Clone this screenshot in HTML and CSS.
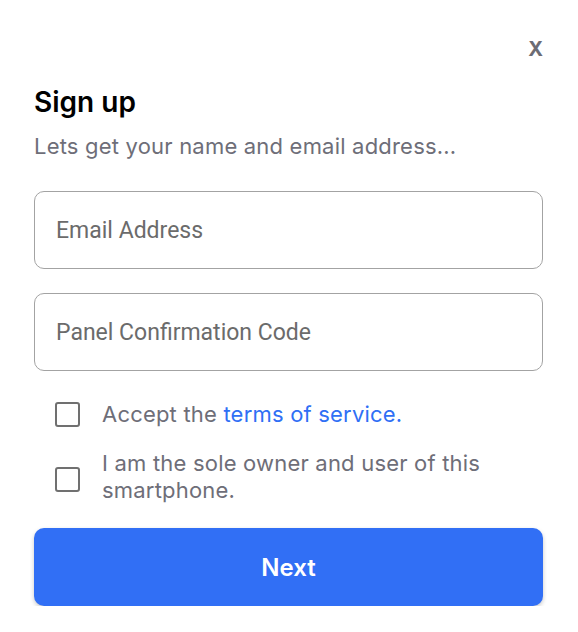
FILE: index.html
```html
<!DOCTYPE html>
<html lang="en">
<head>
<meta charset="utf-8">
<title>Sign up</title>
<link rel="stylesheet" href="styles.css">
</head>
<body>
<div class="modal">
  <div class="close-row"><button class="close" type="button">X</button></div>
  <h1 class="title">Sign up</h1>
  <p class="subtitle">Lets get your name and email address...</p>
  <div class="fields">
    <input class="field" type="email" placeholder="Email Address">
    <input class="field" type="text" placeholder="Panel Confirmation Code">
  </div>
  <div class="checks">
    <label class="check">
      <span class="box"></span>
      <span class="label">Accept the <a class="link" href="#">terms of service.</a></span>
    </label>
    <label class="check check--multi">
      <span class="box"></span>
      <span class="label">I am the sole owner and user of this smartphone.</span>
    </label>
  </div>
  <button class="next" type="button">Next</button>
</div>
</body>
</html>
```

FILE: styles.css
```css
* { box-sizing: border-box; }
html, body { margin: 0; padding: 0; background: #ffffff; }
body { font-family: Inter, "Noto Sans", sans-serif; }

.modal {
  width: 578px;
  padding: 37px 35px 0 34px;
  display: flex;
  flex-direction: column;
}

.close-row {
  display: flex;
  justify-content: flex-end;
  height: 24px;
}
.close {
  border: 0;
  background: none;
  padding: 0;
  font-family: Inter, sans-serif;
  font-weight: 700;
  font-size: 20px;
  line-height: 24px;
  color: #6c6c74;
}

.title {
  margin: 25px 0 0;
  font-size: 28px;
  line-height: 32px;
  font-weight: 600;
  color: #000000;
}

.subtitle {
  margin: 14px 0 0;
  font-size: 22px;
  line-height: 28px;
  letter-spacing: 0.2px;
  color: #6e6e78;
}

.fields {
  margin-top: 31px;
  display: flex;
  flex-direction: column;
  gap: 24px;
}
.field {
  width: 100%;
  height: 78px;
  border: 1.5px solid #a3a3a3;
  border-radius: 10px;
  padding: 0 21px;
  font-family: Roboto, sans-serif;
  font-size: 23px;
  color: #333;
  background: #fff;
  outline: none;
}
.field::placeholder { color: #6b6b6b; }

.checks {
  margin-top: 30px;
  display: flex;
  flex-direction: column;
  gap: 22px;
  padding-left: 21px;
}
.check {
  display: flex;
  align-items: center;
  gap: 22px;
}
.box {
  flex: none;
  width: 25px;
  height: 25px;
  border: 2px solid #707070;
  border-radius: 3px;
}
.check--multi .box { margin-top: 5px; }
.label {
  font-size: 22px;
  line-height: 27px;
  letter-spacing: 0.2px;
  color: #6e6e78;
  max-width: 400px;
}
.link {
  color: #2f6ff5;
  text-decoration: none;
}

.next {
  margin-top: 24px;
  height: 78px;
  width: 100%;
  border: 0;
  border-radius: 10px;
  background: #316ff5;
  color: #ffffff;
  font-family: Inter, sans-serif;
  font-weight: 600;
  font-size: 24px;
  box-shadow: 0 2px 4px rgba(0, 0, 0, 0.22);
}
```
